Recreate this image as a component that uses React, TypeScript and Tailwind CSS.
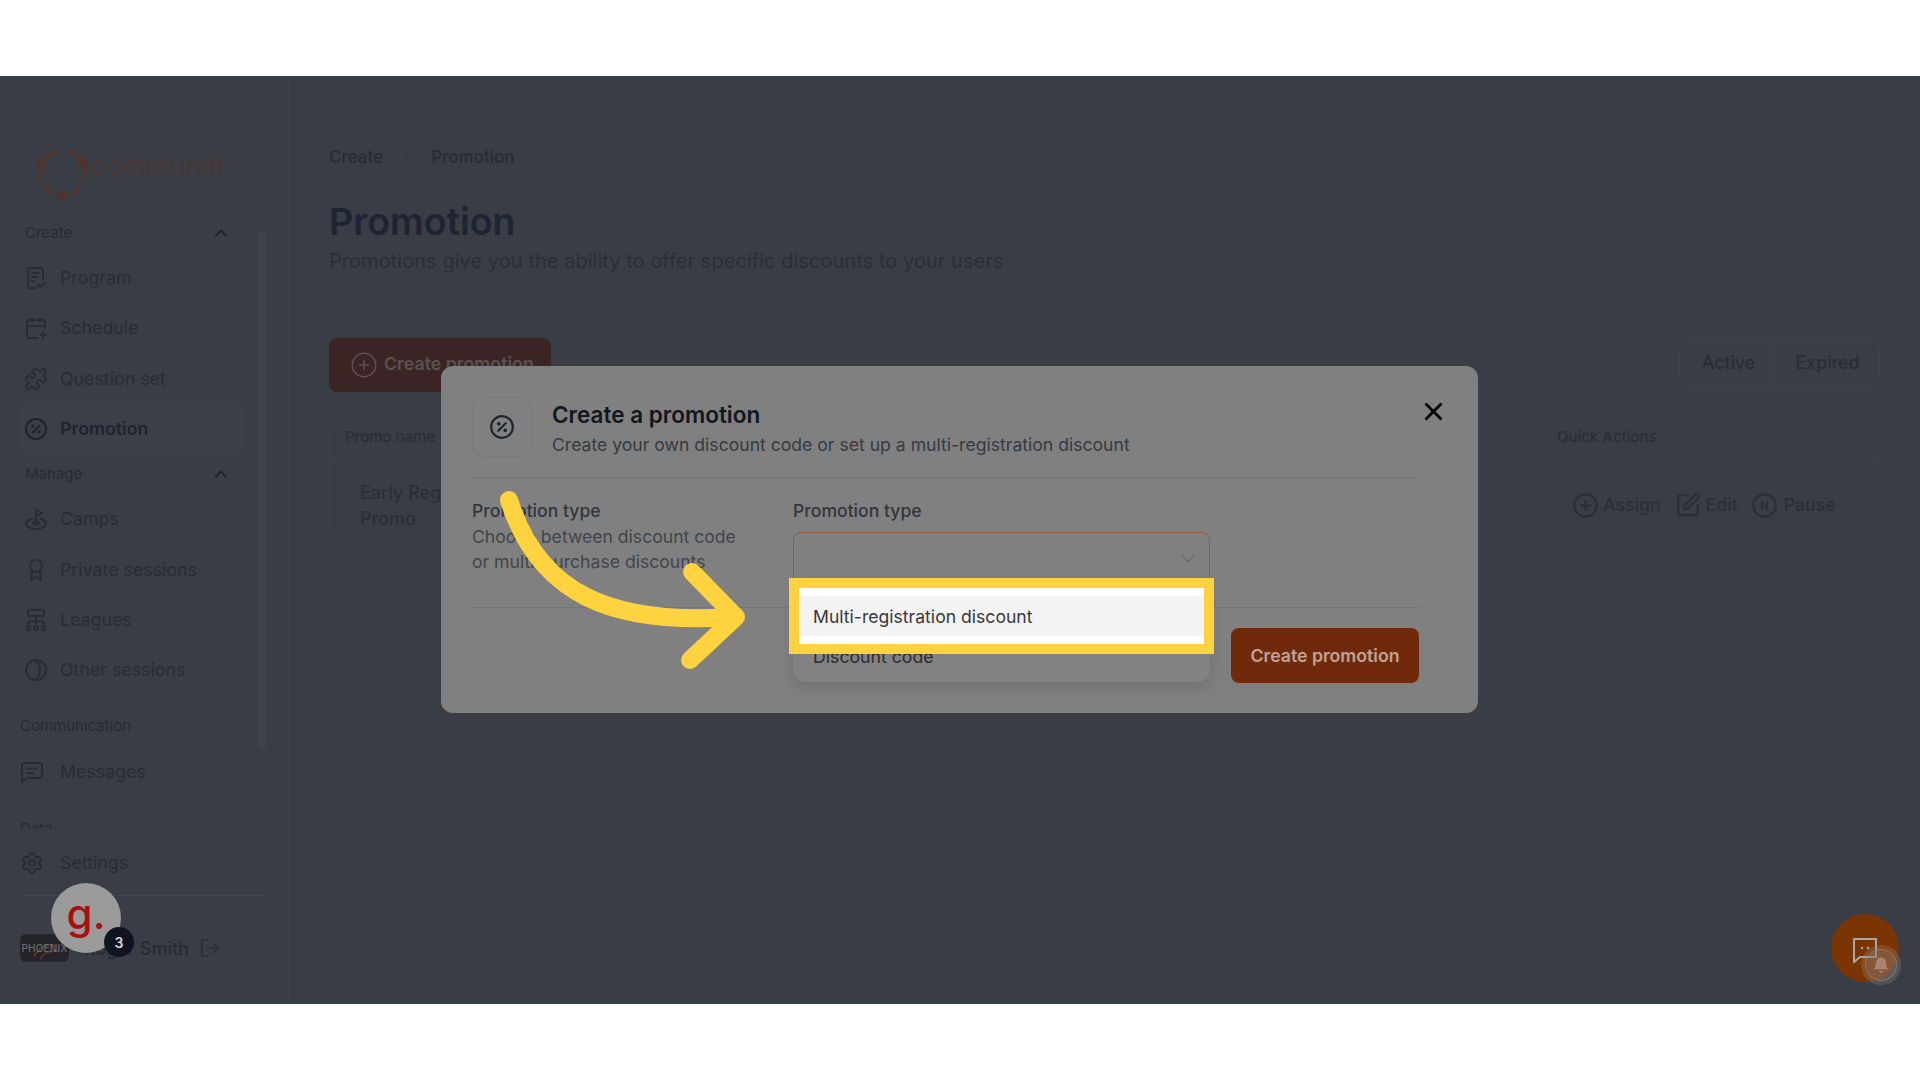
import { Award, CalendarPlus, ChevronDown, ChevronRight, ChevronUp, CirclePause, CirclePlus, LogOut, Puzzle, Settings, SquarePen, X } from "lucide-react";
import type { ReactNode } from "react";

const ic = "w-[24px] h-[24px] shrink-0";

function Percent({ className = ic }: { className?: string }) {
  return (
    <svg viewBox="0 0 24 24" fill="none" stroke="currentColor" strokeWidth="2" strokeLinecap="round" className={className}>
      <circle cx="12" cy="12" r="10" />
      <path d="M15.500 8.500l-7 7" />
      <circle cx="9" cy="9" r="0.700" fill="currentColor" />
      <circle cx="15" cy="15" r="0.700" fill="currentColor" />
    </svg>
  );
}
function ProgramIcon() {
  return (
    <svg viewBox="0 0 24 24" fill="none" stroke="currentColor" strokeWidth="2" strokeLinecap="round" strokeLinejoin="round" className={ic}>
      <path d="M12 22H6.500A2.500 2.500 0 0 1 4 19.500V4.500A2.500 2.500 0 0 1 6.500 2h10A2.500 2.500 0 0 1 19 4.500V13" />
      <path d="M8 7h7M8 11h5M8 15h2M14 19l2 2 5-4.500" />
    </svg>
  );
}
function CampIcon() {
  return (
    <svg viewBox="0 0 24 24" fill="none" stroke="currentColor" strokeWidth="2" strokeLinecap="round" strokeLinejoin="round" className={ic}>
      <path d="M12 13V2l6 4-6 3.500" />
      <path d="M8 11.800C4.400 12.700 2 14.200 2 16.500 2 19.500 6.500 22 12 22s10-2.500 10-5.500c0-2.300-2.400-3.800-6-4.700" />
      <ellipse cx="12" cy="16" rx="3" ry="1.300" />
    </svg>
  );
}
function LeagueIcon() {
  return (
    <svg viewBox="0 0 24 24" fill="none" stroke="currentColor" strokeWidth="2" strokeLinecap="round" strokeLinejoin="round" className={ic}>
      <rect x="4" y="2" width="16" height="6" rx="2" />
      <path d="M12 8v10M4.500 18v-2.500a2 2 0 0 1 2-2h11a2 2 0 0 1 2 2V18" />
      <circle cx="4.500" cy="20" r="2" />
      <circle cx="12" cy="20" r="2" />
      <circle cx="19.500" cy="20" r="2" />
    </svg>
  );
}
function OtherIcon() {
  return (
    <svg viewBox="0 0 24 24" fill="none" stroke="currentColor" strokeWidth="2" strokeLinecap="round" className={ic}>
      <circle cx="12" cy="12" r="10" />
      <path d="M11 2.200C14.500 5 16 8.300 16 12s-1.500 7-5 9.800" />
    </svg>
  );
}
function MessageIcon() {
  return (
    <svg viewBox="0 0 24 24" fill="none" stroke="currentColor" strokeWidth="2" strokeLinecap="round" strokeLinejoin="round" className={ic}>
      <path d="M2 5.500A2.500 2.500 0 0 1 4.500 3h15A2.500 2.500 0 0 1 22 5.500v10a2.500 2.500 0 0 1-2.500 2.500H7l-5 4z" />
      <path d="M7 8.500h10M7 13h6" />
    </svg>
  );
}

function Item({ icon, label, active, outdent }: { icon: ReactNode; label: string; active?: boolean; outdent?: boolean }) {
  return (
    <div className={`flex items-center h-[50.3px] rounded-lg w-[225px] ${active ? "bg-[#3b3f47] text-[#1e2430] font-semibold" : "text-[#282c35]"}`}>
      <div className={`w-[40px] flex justify-start ${outdent ? "pl-0" : "pl-[4px]"}`}>{icon}</div>
      <span className="text-[17.8px] leading-6">{label}</span>
    </div>
  );
}
function Head({ label }: { label: string }) {
  return (
    <div className="flex items-center justify-between h-[20px] pl-[5px] w-[211px] text-[15px] text-[#272b33]">
      <span>{label}</span>
      <ChevronUp className="w-[20px] h-[20px] text-[#1f232b]" strokeWidth={2.5} />
    </div>
  );
}

function Logo() {
  return (
    <div className="h-[52px] mt-[73px] ml-[17px] flex items-start shrink-0">
      <svg viewBox="0 0 52 52" className="w-[52px] h-[52px] shrink-0" fill="none" stroke="#50332a" strokeWidth="3" strokeLinecap="round">
        <path d="M10.300 7L21.300 1.700M29.700 1L41.300 7.700M49 19.300L47 31M43 39.300L33.700 46M17.300 46L8 39.300M3.700 31L2.300 20.300" />
        <g fill="#50332a" stroke="none">
          <circle cx="4.700" cy="13.700" r="4.700" />
          <circle cx="45.300" cy="13.700" r="4.700" />
          <circle cx="25.300" cy="46.700" r="5" />
        </g>
      </svg>
      <span className="font-light text-[27px] leading-[32px] text-[#4e342b] tracking-[0.3px] ml-[2px] mt-[1px]">communiti</span>
    </div>
  );
}

function Sidebar() {
  return (
    <aside className="w-[289px] h-full shrink-0 border-r border-[#3e4249] flex flex-col pl-[20px] relative">
      <Logo />
      <div className="h-[606px] mt-[22px] overflow-hidden shrink-0">
        <Head label="Create" />
        <div className="mt-[10px]">
          <Item icon={<ProgramIcon />} label="Program" />
          <Item icon={<CalendarPlus className={ic} />} label="Schedule" />
          <Item icon={<Puzzle className={ic} />} label="Question set" />
          <Item icon={<Percent />} label="Promotion" active />
        </div>
        <div className="mt-[10px]"><Head label="Manage" /></div>
        <div className="mt-[10px]">
          <Item icon={<CampIcon />} label="Camps" />
          <Item icon={<Award className={ic} />} label="Private sessions" />
          <Item icon={<LeagueIcon />} label="Leagues" />
          <Item icon={<OtherIcon />} label="Other sessions" />
        </div>
        <div className="h-[20px] mt-[21px] text-[15px] text-[#272b33] leading-5">Communication</div>
        <div className="mt-[10px]"><Item icon={<MessageIcon />} label="Messages" outdent /></div>
        <div className="h-[20px] mt-[22px] text-[15px] text-[#272b33] leading-5">Data</div>
      </div>
      <div className="mt-[9px]"><Item icon={<Settings className={ic} />} label="Settings" outdent /></div>
      <div className="h-px bg-[#41454d] w-[248px] mt-[7px]" />
      <div className="flex items-center mt-[38px] h-[28px]">
        <div className="relative w-[49px] h-[28px] rounded-md bg-[#24242a] overflow-hidden flex items-center justify-center">
          <svg viewBox="0 0 49 28" className="absolute inset-0 w-full h-full" fill="none" stroke="#6b3a22" strokeWidth="1.500">
            <path d="M14 22C20 12 30 8 36 12" />
            <path d="M20 25C24 18 32 16 38 18" />
          </svg>
          <span className="relative text-[10px] tracking-[0.2px] text-[#77777a]">PHOENIX</span>
        </div>
        <span className="text-[18px] text-[#262a33] font-medium ml-[15px] whitespace-nowrap">Roger Smith</span>
        <LogOut className="w-[22px] h-[22px] ml-[10px] text-[#2a2e37]" strokeWidth={1.8} />
      </div>
      <div className="absolute left-[258px] top-[156px] w-[8px] h-[516px] bg-[#3e4249]" />
    </aside>
  );
}

function Page() {
  return (
    <main className="flex-1 min-w-0 pl-[40px] pr-[40px] pt-[70px]">
      <div className="flex items-center h-[24px] text-[17px] font-medium text-[#272b33]">
        <span>Create</span>
        <ChevronRight className="w-[16px] h-[16px] mx-[16px] text-[#33373f]" />
        <span>Promotion</span>
      </div>
      <h1 className="mt-[30px] text-[37.500px] leading-[44px] font-semibold text-[#1d2432]">Promotion</h1>
      <p className="mt-[3px] text-[20.100px] leading-[28px] text-[#2a2e36]">Promotions give you the ability to offer specific discounts to your users</p>
      <div className="flex justify-between items-start mt-[63px]">
        <div className="flex items-center gap-[6px] w-[222px] h-[54px] pl-[21px] rounded-lg bg-[#3b2524] text-[#5a5250] text-[17.800px] font-semibold">
          <CirclePlus className="w-[28px] h-[28px]" strokeWidth={1.3} />
          <span className="-mt-[2px]">Create promotion</span>
        </div>
        <div className="flex h-[49px] rounded-xl border border-[#3f434b] text-[18px] text-[#272b33]">
          <div className="w-[95px] pl-[3px] flex items-center justify-center border-r border-[#3f434b]">Active</div>
          <div className="w-[104px] pl-[1px] flex items-center justify-center">Expired</div>
        </div>
      </div>
      <div className="mt-[21px] rounded-xl border border-[#3e4249] h-[127px] mr-[2px]">
        <div className="flex items-center h-[48px] border-b border-[#3e4249] text-[15px] font-medium text-[#2a2e36]">
          <div className="ml-[15px] w-[1212px]">Promo name</div>
          <div>Quick Actions</div>
        </div>
        <div className="flex items-center h-[88px] text-[18px] text-[#2a2e36]">
          <div className="ml-[30px] w-[1213px] leading-[26px] font-medium"><div>Early Registration</div><div>Promo</div></div>
          <div className="flex items-center font-medium text-[17.700px] -mt-[2px]">
            <CirclePlus className="w-[27px] h-[27px] -ml-[1px]" />
            <span className="ml-[4px]">Assign</span>
            <SquarePen className="w-[26px] h-[26px] ml-[14px]" />
            <span className="ml-[5px]">Edit</span>
            <CirclePause className="w-[27px] h-[27px] ml-[13px]" />
            <span className="ml-[6px]">Pause</span>
          </div>
        </div>
      </div>
    </main>
  );
}

function Modal() {
  return (
    <div className="absolute left-[441px] top-[290px] w-[1037px] h-[347px] rounded-xl bg-[#808080] px-[31px] pt-[31px]">
      <div className="flex h-[81px] w-[948px] border-b border-[#757575]">
        <div className="w-[60px] h-[60px] rounded-xl border border-[#797979] flex items-center justify-center text-[#1c2430]">
          <Percent className="w-[26px] h-[26px]" />
        </div>
        <div className="ml-[20px]">
          <div className="text-[22.500px] leading-[36px] font-semibold text-[#12161d]">Create a promotion</div>
          <div className="text-[17.600px] leading-[24px] text-[#363a41]">Create your own discount code or set up a multi-registration discount</div>
        </div>
      </div>
      <div className="flex h-[130px] w-[948px] border-b border-[#757575] pt-[20px]">
        <div className="w-[321px] text-[17.600px] leading-[25.500px]">
          <div className="font-medium text-[#31353c]">Promotion type</div>
          <div className="text-[#41454b] w-[270px]">Choose between discount code or multi-purchase discounts</div>
        </div>
        <div className="w-[417px]">
          <div className="font-medium text-[17.600px] leading-[25px] text-[#31353c]">Promotion type</div>
          <div className="mt-[9px] h-[70px] rounded-lg border border-[#8f5b42] flex justify-end pr-[10px] pt-[15px]">
            <ChevronDown className="w-[22px] h-[22px] text-[#6a6a6a]" strokeWidth={1.5} />
          </div>
        </div>
      </div>
      <div className="flex justify-end w-[947px] pt-[20px]">
        <div className="w-[188px] h-[55px] rounded-lg bg-[#702a0b] flex items-center justify-center pt-[2px] text-[17.700px] font-semibold text-[#bfa396]">Create promotion</div>
      </div>
      <X className="absolute left-[978px] top-[31px] w-[29px] h-[29px] text-black" strokeWidth={2.3} />
      <div className="absolute left-[352px] top-[218px] w-[417px] h-[98px] rounded-xl bg-[#828282] shadow-[0_6px_16px_rgba(0,0,0,0.12)] flex items-end pb-[11px] pl-[20px] text-[17.700px] text-[#2c2c2c]">
        Discount code
      </div>
    </div>
  );
}

function Highlight() {
  return (
    <div className="absolute left-[789px] top-[502px] w-[425px] h-[76px] border-[10px] border-[#ffd23f] bg-white flex items-center">
      <div className="w-full h-[40px] bg-[#f3f3f3] flex items-center pl-[14px] pt-[2px] text-[17.600px] text-[#383838]">Multi-registration discount</div>
    </div>
  );
}

function Arrow() {
  return (
    <svg className="absolute left-[490px] top-[400px] w-[270px] h-[300px]" viewBox="0 0 270 300" fill="none" stroke="#ffd23f" strokeWidth="18" strokeLinecap="round" strokeLinejoin="round">
      <path d="M19 24C48 116 118 150 245 141" />
      <path d="M202 96L246 141L200 184" />
    </svg>
  );
}

function Overlays() {
  return (
    <>
      <div className="absolute left-[51px] top-[807px] w-[70px] h-[70px] rounded-full bg-[#9b9b9b] flex items-center justify-center">
        <span className="text-[42px] leading-[42px] font-medium text-[#a80f0f] -mt-[8px]">g.</span>
      </div>
      <div className="absolute left-[104px] top-[851px] w-[30px] h-[30px] rounded-full bg-[#0e1422] flex items-center justify-center text-[14px] font-semibold text-[#d8d8d8]">3</div>
      <div className="absolute left-[1831px] top-[838px] w-[68px] h-[68px] rounded-full bg-[#7a3503] flex items-center justify-center">
        <svg viewBox="0 0 28 28" className="w-[28px] h-[28px] mt-[3px]" fill="none" stroke="#a8a8a8" strokeWidth="2" strokeLinejoin="round">
          <path d="M3 3h22v18H9l-6 5z" />
          <circle cx="11" cy="12" r="1.200" fill="#a8a8a8" stroke="none" />
          <circle cx="17" cy="12" r="1.200" fill="#a8a8a8" stroke="none" />
        </svg>
      </div>
      <div className="absolute left-[1861px] top-[869px] w-[40px] h-[40px] rounded-full bg-[#9a9a9a]/25 flex items-center justify-center">
        <div className="w-[32px] h-[32px] rounded-full border border-[#a08a7c]/50 bg-[#8a6a58]/35 flex items-center justify-center">
          <svg viewBox="0 0 24 24" className="w-[20px] h-[20px]" fill="#a98470">
            <path d="M12 3a6 6 0 0 0-6 6c0 5-2 7-3 8h18c-1-1-3-3-3-8a6 6 0 0 0-6-6zM9.500 19a2.500 2.500 0 0 0 5 0z" />
          </svg>
        </div>
      </div>
    </>
  );
}

export default function App() {
  return (
    <div className="w-[1920px] h-[1080px] bg-white font-[Inter,sans-serif] overflow-hidden flex flex-col">
      <div className="h-[76px] shrink-0 bg-white" />
      <div className="relative h-[928px] shrink-0 bg-[#393d45] flex">
        <Sidebar />
        <Page />
        <Modal />
        <Highlight />
        <Arrow />
        <Overlays />
      </div>
      <div className="flex-1 bg-white" />
    </div>
  );
}
